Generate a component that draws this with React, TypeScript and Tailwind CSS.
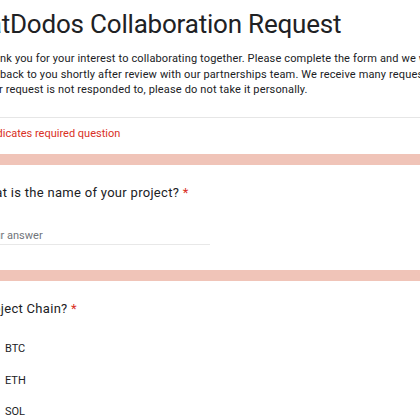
import React from "react";

const chains = ["BTC", "ETH", "SOL"];

function Asterisk() {
  return <span className="text-[#d93025]"> *</span>;
}

export default function App() {
  return (
    <div className="w-[420px] h-[420px] overflow-hidden bg-[#f0c4b8] font-['Roboto',sans-serif] text-[#202124]">
      <div className="-ml-[24px] w-[700px] flex flex-col gap-[11px]">
        {/* header card */}
        <div className="bg-white">
          <div className="pt-[7px]">
            <h1 className="text-[26px] leading-[34px] tracking-[-0.2px] -ml-[2px]">
              FatDodos Collaboration Request
            </h1>
            <p className="mt-[10px] ml-[5px] text-[11px] leading-[15.5px] tracking-[0.15px] whitespace-nowrap">
              Thank you for your interest to collaborating together. Please complete the form and we will
              <br />
              get back to you shortly after review with our partnerships team. We receive many requests, if
              <br />
              your request is not responded to, please do not take it personally.
            </p>
          </div>
          <div className="mt-[19px] border-t border-[#e6e6e6]" />
          <div className="pt-[8px] pb-[12px] pl-[4px] text-[11px] leading-4 text-[#d93025]">
            * Indicates required question
          </div>
        </div>

        {/* project name */}
        <div className="bg-white pt-[18px] pb-[25px]">
          <div className="text-[13px] leading-5 tracking-[0.3px]">
            What is the name of your project?
            <Asterisk />
          </div>
          <div className="mt-[25px] w-[234px] pl-[6px] border-b border-[#e8e8e8] text-[11px] leading-4 text-[#70757a]">
            Your answer
          </div>
        </div>

        {/* chain */}
        <div className="bg-white pt-[18px] pb-6">
          <div className="pl-[4px] text-[13px] leading-5 tracking-[0.3px]">
            Project Chain?
            <Asterisk />
          </div>
          <div className="mt-[15px] flex flex-col">
            {chains.map((c) => (
              <label key={c} className="h-[31.5px] flex items-center gap-[9px]">
                <span className="w-5 h-5 rounded-full border-2 border-[#5f6368]" />
                <span className="text-[11px]">{c}</span>
              </label>
            ))}
          </div>
        </div>
      </div>
    </div>
  );
}
